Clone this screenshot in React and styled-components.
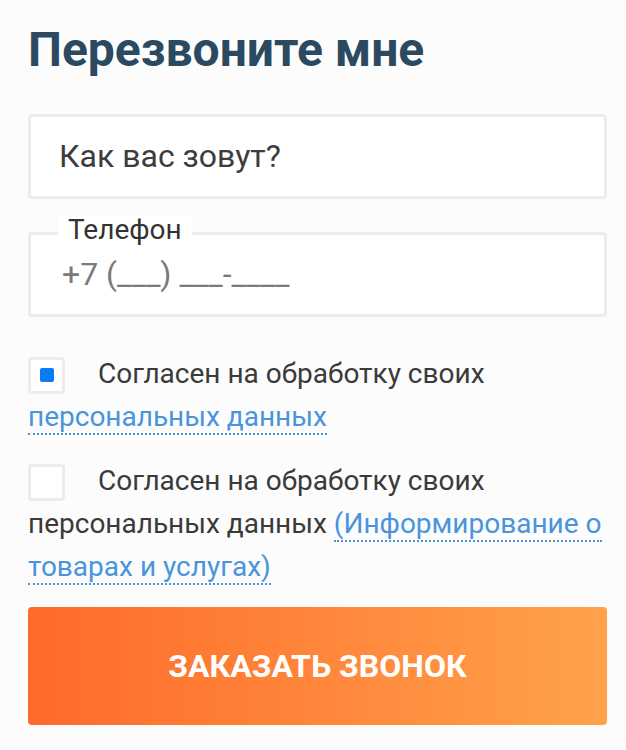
import React from "react";
import styled, { createGlobalStyle } from "styled-components";

const GlobalStyle = createGlobalStyle`
  body {
    margin: 0;
    background: #fcfcfc;
    font-family: Roboto, "Liberation Sans", sans-serif;
  }
`;

const App = () => {
  return (
    <>
      <GlobalStyle />
      <Form>
        <Title>Перезвоните мне</Title>
        <Field>
          <Input placeholder="Как вас зовут?" $dark />
        </Field>
        <Field>
          <Label>Телефон</Label>
          <Input placeholder="+7 (___) ___-____" $pad={31} />
        </Field>
        <Agree>
          <Check $checked />
          Согласен на обработку своих <Link>персональных данных</Link>
        </Agree>
        <Agree>
          <Check />
          Согласен на обработку своих персональных данных{" "}
          <Link>(Информирование о товарах и услугах)</Link>
        </Agree>
        <Submit>Заказать звонок</Submit>
      </Form>
    </>
  );
};

const Form = styled.form`
  width: 579px;
  padding: 21px 0 0 28px;
  display: flex;
  flex-direction: column;
`;

const Title = styled.h1`
  margin: 0 0 35px;
  font-size: 48px;
  line-height: 1.2;
  font-weight: 700;
  color: #2b4a62;
`;

const Field = styled.div`
  position: relative;
  margin-bottom: 33px;
`;

const Label = styled.span`
  position: absolute;
  top: -17px;
  left: 30px;
  padding: 0 10px;
  background: #fff;
  font-size: 28px;
  line-height: 29px;
  color: #333;
`;

const Input = styled.input`
  box-sizing: border-box;
  display: block;
  width: 100%;
  height: 85px;
  padding: 0 ${(p) => p.$pad || 28}px;
  border: 3px solid #ececec;
  border-radius: 4px;
  background: #fff;
  font-family: inherit;
  font-size: 32px;
  color: #333;
  outline: none;
  &::placeholder {
    color: ${(p) => (p.$dark ? "#3d3d3d" : "#7a7a7a")};
    opacity: 1;
  }
`;

const Agree = styled.p`
  margin: 2px 0 19px;
  font-size: 28px;
  line-height: 43px;
  color: #3a3a3a;
`;

const Check = styled.span`
  box-sizing: border-box;
  display: inline-flex;
  align-items: center;
  justify-content: center;
  width: 37px;
  height: 37px;
  margin-right: 33px;
  vertical-align: middle;
  border: 3px solid #ececec;
  border-radius: 4px;
  background: #fff;
  &::after {
    content: "";
    width: 14px;
    height: 14px;
    border-radius: 2px;
    background: ${(p) => (p.$checked ? "#0a7bf0" : "transparent")};
  }
`;

const Link = styled.a`
  color: #4a94dc;
  text-decoration: none;
  border-bottom: 2px dotted #4a94dc;
  cursor: pointer;
`;

const Submit = styled.button`
  height: 118px;
  border: 0;
  border-radius: 4px;
  background: linear-gradient(90deg, #ff6a2a 0%, #ffa24b 100%);
  font-family: inherit;
  font-size: 32px;
  font-weight: 700;
  text-transform: uppercase;
  color: #fff;
  cursor: pointer;
`;

export default App;
